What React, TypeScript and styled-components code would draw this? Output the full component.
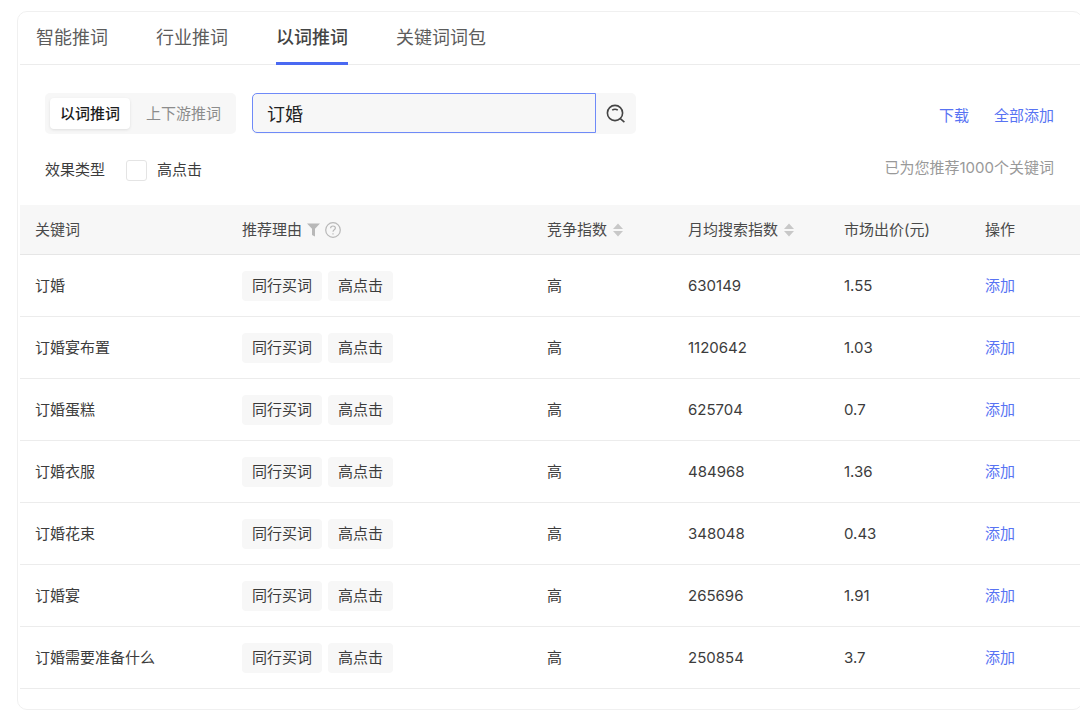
import React, { useState } from "react";
import styled, { createGlobalStyle } from "styled-components";

const GlobalStyle = createGlobalStyle`
  * { box-sizing: border-box; }
  body {
    margin: 0;
    background: #fff;
    color: #3c3c3c;
    font: 400 15px/22px Inter, "Noto Sans CJK SC", sans-serif;
    overflow-x: hidden;
  }
  button, input { font: inherit; color: inherit; }
  button { border: 0; background: none; padding: 0; cursor: pointer; }
`;

const Card = styled.main`
  margin: 11px -3px 0 17px;
  padding: 0 1px 20px 2px;
  border: 1px solid #f0f0f0;
  border-radius: 10px;
`;

const Tabs = styled.nav`
  display: flex;
  gap: 48px;
  padding-left: 16px;
  border-bottom: 1px solid #ececec;
`;

const Tab = styled.button<{ $active: boolean }>`
  height: 53px;
  margin-bottom: -1px;
  padding-top: 2px;
  border-bottom: 3px solid ${(p) => (p.$active ? "#4a69f2" : "transparent")};
  font-size: 18px;
  font-weight: ${(p) => (p.$active ? 500 : 400)};
  color: ${(p) => (p.$active ? "#444" : "#5c5c5c")};
`;

const Tools = styled.section`
  padding: 28px 27px 22px 25px;
`;

const ToolRow = styled.div`
  display: flex;
  align-items: center;
  justify-content: space-between;
`;

const FilterRow = styled(ToolRow)`
  margin-top: 23px;
`;

const Group = styled.div<{ $gap: number }>`
  display: flex;
  align-items: center;
  gap: ${(p) => p.$gap}px;
`;

const Actions = styled(Group)`
  padding-top: 4px;
`;

const Segment = styled.div`
  display: flex;
  gap: 6px;
  padding: 5px;
  border-radius: 5px;
  background: #f7f7f7;
`;

const SegmentButton = styled.button<{ $active: boolean }>`
  height: 31px;
  padding: 0 10px;
  border-radius: 4px;
  color: ${(p) => (p.$active ? "#1c1c1c" : "#8c8c8c")};
  font-weight: ${(p) => (p.$active ? 500 : 400)};
  background: ${(p) => (p.$active ? "#fff" : "transparent")};
  box-shadow: ${(p) => (p.$active ? "0 1px 3px rgba(0, 0, 0, 0.1)" : "none")};
`;

const Search = styled.form`
  display: flex;
  height: 41px;
  border-radius: 5px;
  background: #f7f7f7;
`;

const SearchInput = styled.input`
  width: 344px;
  height: 40px;
  padding: 0 14px;
  border: 1px solid #6f8af8;
  border-radius: 5px 0 0 5px;
  background: #f7f7f7;
  color: #222;
  font-size: 18px;
  outline: none;
`;

const SearchButton = styled.button`
  display: grid;
  place-items: center;
  width: 40px;
`;

const Link = styled.a`
  color: #5873f3;
  text-decoration: none;
`;

const Count = styled.span`
  color: #999;
  padding-bottom: 4px;
`;

const CheckLabel = styled.label`
  display: flex;
  align-items: center;
  gap: 10px;
`;

const Checkbox = styled.input`
  appearance: none;
  width: 21px;
  height: 21px;
  margin: 0;
  border: 1px solid #e4e4e4;
  border-radius: 3px;
  background: #fff;
  &:checked { background: #4a69f2; }
`;

const Table = styled.table`
  width: 100%;
  table-layout: fixed;
  border-collapse: separate;
  border-spacing: 0;
  text-align: left;
`;

const Th = styled.th`
  height: 50px;
  padding: 0 0 0 15px;
  border-bottom: 1px solid #e6e6e6;
  background: #f7f7f7;
  color: #4a4a4a;
  font-weight: 400;
  white-space: nowrap;
`;

const Td = styled.td`
  height: 62px;
  padding: 0 0 0 15px;
  border-bottom: 1px solid #ececec;
`;

const Tag = styled.span`
  padding: 4px 10px;
  border-radius: 4px;
  background: #f7f7f7;
`;

const IconButton = styled.button`
  display: flex;
`;

const SearchIcon = () => (
  <svg width="20" height="20" viewBox="0 0 20 20" fill="none" stroke="#444" strokeWidth="1.6">
    <circle cx="9" cy="9" r="7.6" />
    <path d="M14 14.4 18.4 18.2M6.2 6.2Q9 4.2 11.8 6.2" />
  </svg>
);

const FilterIcon = () => (
  <svg width="13" height="14" viewBox="0 0 13 14" fill="#b8b8b8">
    <path d="M0 0.5H13L8 5.8V13.5L5 12V5.8Z" />
  </svg>
);

const HelpIcon = () => (
  <svg width="16" height="16" viewBox="0 0 16 16" fill="none" stroke="#b8b8b8" strokeWidth="1.2">
    <circle cx="8" cy="8" r="7.3" />
    <path d="M5.6 6.2C5.6 3.2 10.4 3.3 10.4 6.1C10.4 7.9 8 7.8 8 9.8M8 11.2V12.6" />
  </svg>
);

const SortIcon = () => (
  <svg width="10" height="14" viewBox="0 0 10 14" fill="#c8c8c8">
    <path d="M5 0.5 10 6H0ZM5 13.5 0 8H10Z" />
  </svg>
);

const tabs = ["智能推词", "行业推词", "以词推词", "关键词词包"];
const modes = ["以词推词", "上下游推词"];
const columnWidths = [207, 305, 141, 156, 141, 112];
const rows = [
  ["订婚", "630149", "1.55"],
  ["订婚宴布置", "1120642", "1.03"],
  ["订婚蛋糕", "625704", "0.7"],
  ["订婚衣服", "484968", "1.36"],
  ["订婚花束", "348048", "0.43"],
  ["订婚宴", "265696", "1.91"],
  ["订婚需要准备什么", "250854", "3.7"],
];

export default function App() {
  const [tab, setTab] = useState(2);
  const [mode, setMode] = useState(0);
  const [query, setQuery] = useState("订婚");

  return (
    <>
      <GlobalStyle />
      <Card>
        <Tabs>
          {tabs.map((name, i) => (
            <Tab key={name} $active={i === tab} onClick={() => setTab(i)}>{name}</Tab>
          ))}
        </Tabs>
        <Tools>
          <ToolRow>
            <Group $gap={16}>
              <Segment>
                {modes.map((name, i) => (
                  <SegmentButton key={name} $active={i === mode} onClick={() => setMode(i)}>{name}</SegmentButton>
                ))}
              </Segment>
              <Search onSubmit={(e) => e.preventDefault()}>
                <SearchInput aria-label="关键词" value={query} onChange={(e) => setQuery(e.target.value)} />
                <SearchButton aria-label="搜索"><SearchIcon /></SearchButton>
              </Search>
            </Group>
            <Actions $gap={25}>
              <Link href="#download">下载</Link>
              <Link href="#add-all">全部添加</Link>
            </Actions>
          </ToolRow>
          <FilterRow>
            <Group $gap={21}>
              <span>效果类型</span>
              <CheckLabel><Checkbox type="checkbox" />高点击</CheckLabel>
            </Group>
            <Count>已为您推荐1000个关键词</Count>
          </FilterRow>
        </Tools>
        <Table>
          <colgroup>
            {columnWidths.map((w, i) => <col key={i} width={w} />)}
          </colgroup>
          <thead>
            <tr>
              <Th>关键词</Th>
              <Th>
                <Group $gap={5}>
                  推荐理由
                  <IconButton aria-label="筛选"><FilterIcon /></IconButton>
                  <IconButton aria-label="说明"><HelpIcon /></IconButton>
                </Group>
              </Th>
              <Th><Group $gap={6}>竞争指数<IconButton aria-label="排序"><SortIcon /></IconButton></Group></Th>
              <Th><Group $gap={6}>月均搜索指数<IconButton aria-label="排序"><SortIcon /></IconButton></Group></Th>
              <Th>市场出价(元)</Th>
              <Th>操作</Th>
            </tr>
          </thead>
          <tbody>
            {rows.map(([word, volume, price]) => (
              <tr key={word}>
                <Td>{word}</Td>
                <Td><Group $gap={6}><Tag>同行买词</Tag><Tag>高点击</Tag></Group></Td>
                <Td>高</Td>
                <Td>{volume}</Td>
                <Td>{price}</Td>
                <Td><Link href="#add">添加</Link></Td>
              </tr>
            ))}
          </tbody>
        </Table>
      </Card>
    </>
  );
}
